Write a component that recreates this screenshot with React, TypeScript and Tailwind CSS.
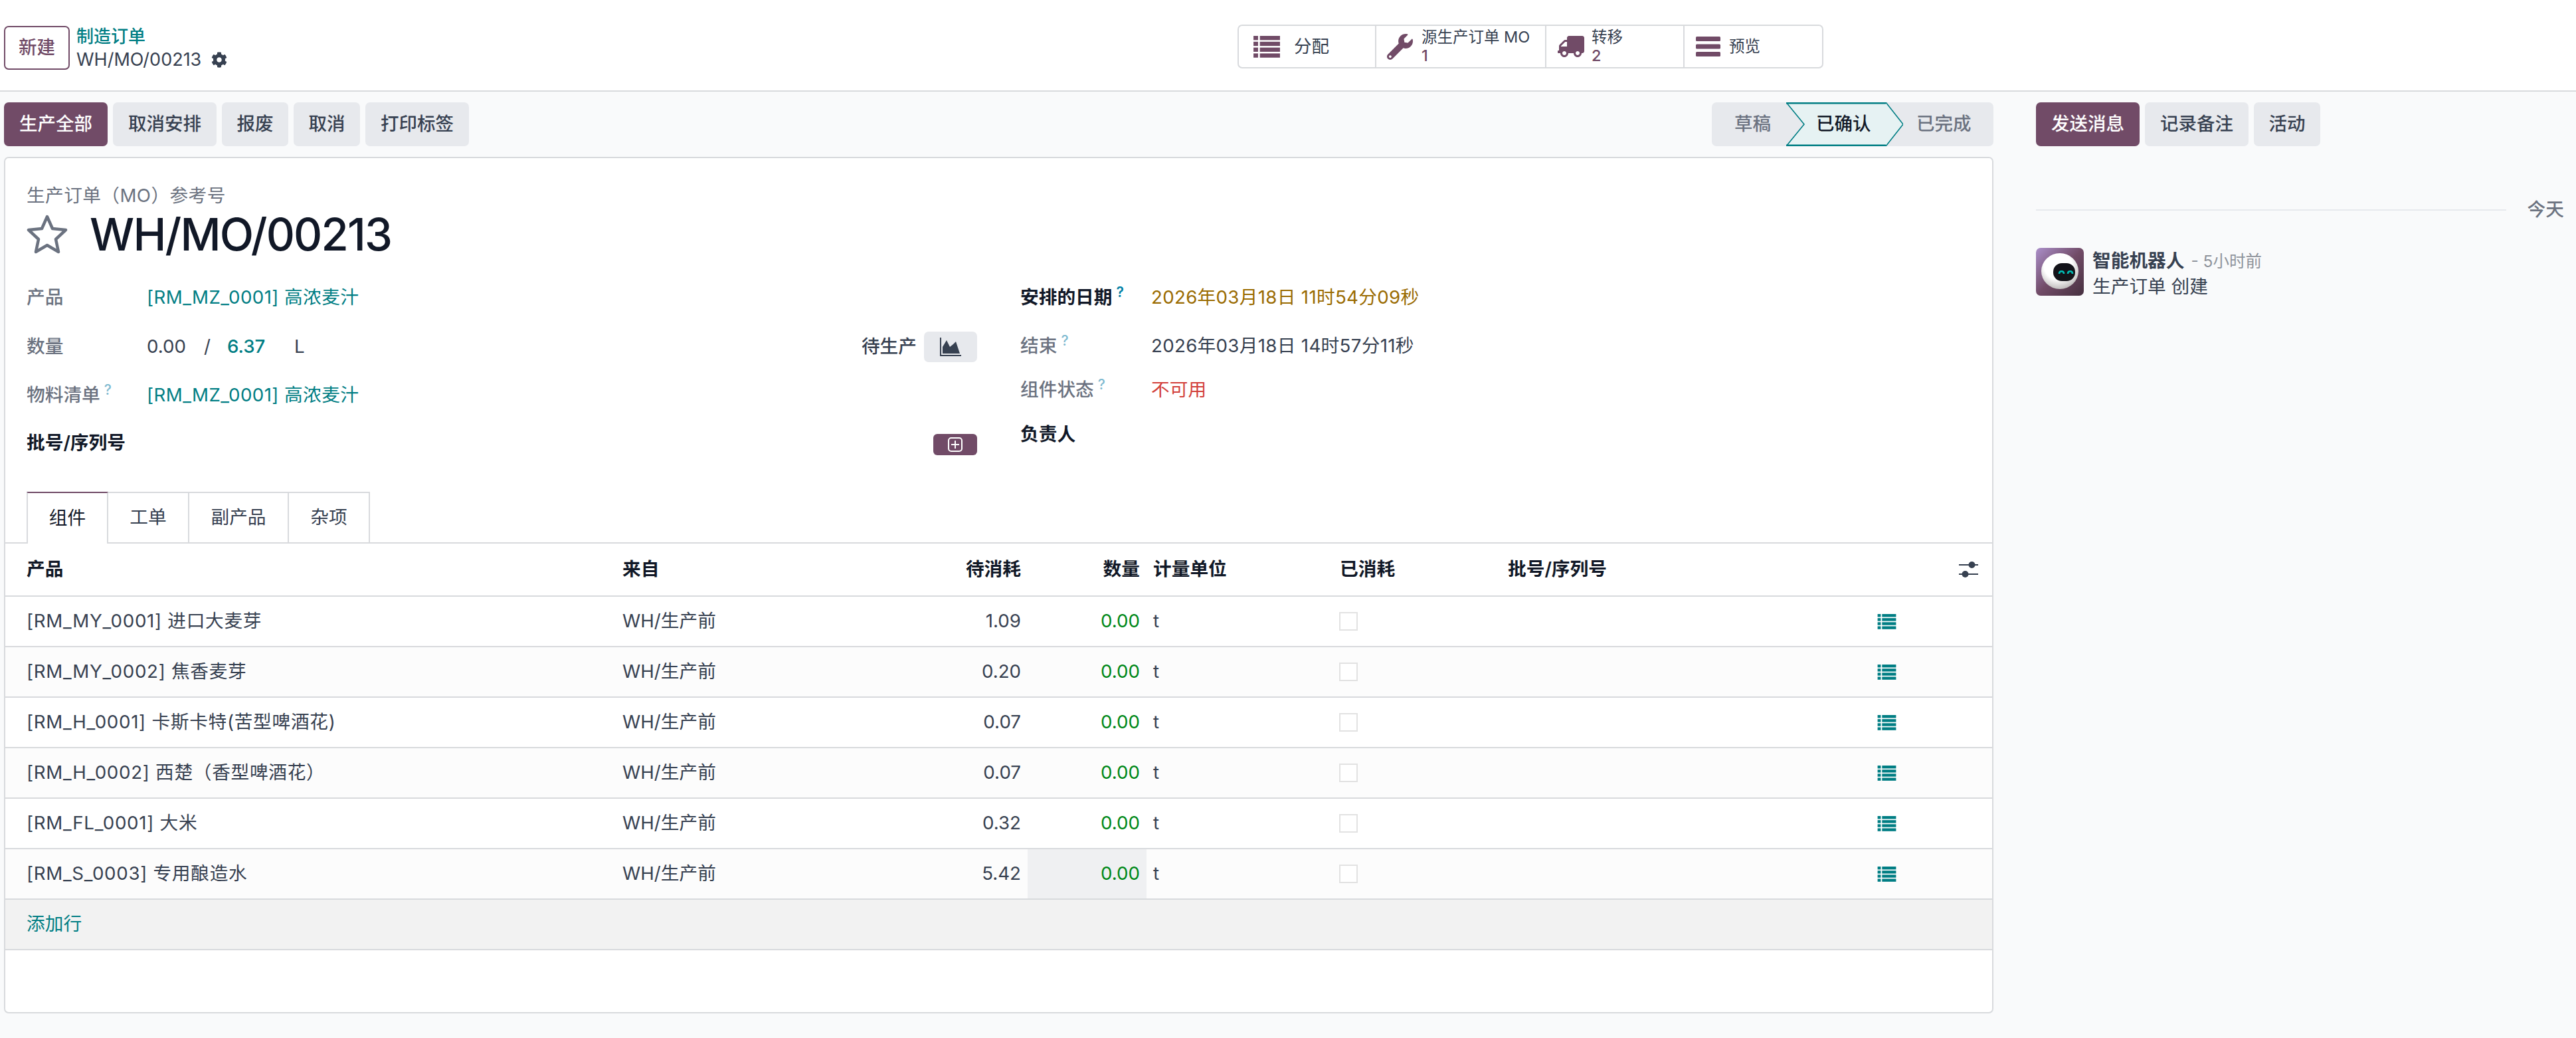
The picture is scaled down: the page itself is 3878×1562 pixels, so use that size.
import React from "react";
import { FaCog, FaWrench, FaTruck } from "react-icons/fa";

const ListIcon = ({ cls }: { cls: string }) => (
  <svg viewBox="0 0 29 24" className={cls} fill="currentColor">
    <rect x="0" y="0" width="5" height="4.6" /><rect x="7" y="0" width="22" height="4.6" />
    <rect x="0" y="6.4" width="5" height="4.6" /><rect x="7" y="6.4" width="22" height="4.6" />
    <rect x="0" y="12.8" width="5" height="4.6" /><rect x="7" y="12.8" width="22" height="4.6" />
    <rect x="0" y="19.2" width="5" height="4.6" /><rect x="7" y="19.2" width="22" height="4.6" />
  </svg>
);

const Help = ({ faint }: { faint?: boolean }) => (
  <sup className={`ml-[6px] text-[21px] relative -top-[10px] ${faint ? "text-[#7fbad0]" : "text-[#0180a5]"}`}>?</sup>
);

const btn = "h-[66px] rounded-[7px] flex items-center justify-center text-[27.5px] font-medium";
const grey = "bg-[#e7e9ed] text-[#374151]";
const primary = "bg-[#714b67] text-white";

const rows: [string, string, boolean?][] = [
  ["[RM_MY_0001] 进口大麦芽", "1.09"],
  ["[RM_MY_0002] 焦香麦芽", "0.20"],
  ["[RM_H_0001] 卡斯卡特(苦型啤酒花)", "0.07"],
  ["[RM_H_0002] 西楚（香型啤酒花）", "0.07"],
  ["[RM_FL_0001] 大米", "0.32"],
  ["[RM_S_0003] 专用酿造水", "5.42", true],
];

const tableCols = "grid grid-cols-[913px_456px_170px_179px_281px_253px_530px_100px_1fr]";

export default function App() {
  return (
    <div className="w-[3878px] h-[1562px] overflow-hidden bg-[#f9fafb] text-[27.7px] text-[#374151] font-[Inter,'Noto_Sans_CJK_SC',sans-serif]">
      {/* top bar */}
      <header className="h-[138px] bg-white border-b-2 border-[#d8dadd] flex items-start pt-[37px] pl-[6px]">
        <div className="w-[1857px] flex items-center gap-[10px]">
          <button className="w-[99px] h-[66px] rounded-[7px] border-2 border-[#714b67] text-[#714b67] text-[27.5px] font-medium bg-white">新建</button>
          <div className="flex flex-col leading-[35px]">
            <span className="text-[#017e84] font-medium text-[26px]">制造订单</span>
            <span className="flex items-center gap-[15px] text-[#374151] text-[27px]">WH/MO/00213<FaCog className="w-[24px] h-[24px]" /></span>
          </div>
        </div>
        <div className="w-[882px] h-[66px] flex rounded-[7px] border-2 border-[#d8dadd] bg-white">
          <div className="w-[207px] flex items-center pl-[21px] border-r-2 border-[#d8dadd]">
            <ListIcon cls="w-[42px] h-[33px] text-[#714b67]" />
            <span className="ml-[20px] text-[26.5px]">分配</span>
          </div>
          <div className="w-[256px] flex items-center pl-[16px] border-r-2 border-[#d8dadd]">
            <FaWrench className="w-[39px] h-[39px] text-[#714b67]" />
            <div className="ml-[13px] flex flex-col leading-[28px] text-[23.5px] whitespace-nowrap">
              <span>源生产订单 MO</span>
              <span className="text-[#714b67] font-medium">1</span>
            </div>
          </div>
          <div className="w-[208px] flex items-center pl-[17px] border-r-2 border-[#d8dadd]">
            <FaTruck className="w-[40px] h-[36px] text-[#714b67] -scale-x-100" />
            <div className="ml-[11px] flex flex-col leading-[28px] text-[23.5px]">
              <span>转移</span>
              <span className="text-[#714b67] font-medium">2</span>
            </div>
          </div>
          <div className="flex-1 flex items-center pl-[17px]">
            <svg viewBox="0 0 37 30" className="w-[37px] h-[30px] text-[#714b67]" fill="currentColor">
              <rect x="0" y="0" width="37" height="7" rx="1.5" />
              <rect x="0" y="11.5" width="37" height="7" rx="1.5" />
              <rect x="0" y="23" width="37" height="7" rx="1.5" />
            </svg>
            <span className="ml-[13px] text-[23.5px]">预览</span>
          </div>
        </div>
      </header>

      <div className="flex">
        {/* main column */}
        <main className="w-[3065px] pl-[6px] pr-[64px] pt-[16px]">
          <div className="flex justify-between h-[66px]">
            <div className="flex gap-[8px]">
              <button className={`${btn} ${primary} w-[156px]`}>生产全部</button>
              <button className={`${btn} ${grey} w-[156px]`}>取消安排</button>
              <button className={`${btn} ${grey} w-[100px]`}>报废</button>
              <button className={`${btn} ${grey} w-[100px]`}>取消</button>
              <button className={`${btn} ${grey} w-[156px]`}>打印标签</button>
            </div>
            <div className="relative w-[424px] h-[66px] rounded-[7px] bg-[#e7e9ed] flex items-center text-[27.5px] font-medium text-[#6b7280]">
              <svg viewBox="0 0 176 66" className="absolute left-[112px] top-0 w-[176px] h-[66px]">
                <polygon points="0,0 150,0 176,33 150,66 0,66 27,33" fill="#e6f2f3" />
                <path d="M0,0 L27,33 L0,66 M150,66 L176,33 L150,0" fill="none" stroke="#017e84" strokeWidth="1.6" />
                <path d="M0,1.2 H150 M0,64.8 H150" fill="none" stroke="#017e84" strokeWidth="2.6" />
              </svg>
              <span className="relative w-[112px] pl-[34px]">草稿</span>
              <span className="relative w-[176px] pl-[45px] text-[#111827]">已确认</span>
              <span className="relative pl-[20px]">已完成</span>
            </div>
          </div>

          {/* sheet */}
          <section className="mt-[16px] h-[1289px] bg-white border-2 border-[#d8dadd] rounded-[7px]">
            <div className="pl-[32px] pt-[35px]">
              <div className="h-[43px] flex items-center text-[#6b7280] tracking-[0.4px]">生产订单（MO）参考号</div>
              <div className="h-[72px] flex items-center">
                <svg viewBox="0 0 62 60" className="w-[62px] h-[60px]" fill="none" stroke="#6b7280" strokeWidth="4.5" strokeLinejoin="round">
                  <polygon points="31,4 39,22 59,24 44,38 48,57 31,47 14,57 18,38 3,24 23,22" />
                </svg>
                <h1 className="ml-[33px] text-[67px] font-medium text-[#111827] leading-none tracking-[-1.8px]">WH/MO/00213</h1>
              </div>
              <div className="mt-[23px] flex">
                <div className="w-[1431px] flex flex-col">
                  <div className="h-[74px] flex items-center">
                    <span className="w-[181px] text-[#6b7280] font-medium">产品</span>
                    <span className="text-[#017e84] tracking-[0.4px]">[RM_MZ_0001] 高浓麦汁</span>
                  </div>
                  <div className="h-[74px] flex items-center">
                    <span className="w-[181px] text-[#6b7280] font-medium">数量</span>
                    <span className="w-[86px]">0.00</span>
                    <span className="w-[35px]">/</span>
                    <span className="w-[101px] text-[#017e84] font-medium">6.37</span>
                    <span>L</span>
                    <span className="ml-auto font-medium">待生产</span>
                    <span className={`ml-[11px] w-[80px] h-[46px] rounded-[7px] flex items-center justify-center ${grey}`}>
                      <svg viewBox="0 0 32 28" className="w-[32px] h-[28px]" fill="currentColor">
                        <path d="M0 0h2v26h30v2H0z" />
                        <path d="M4 24V14L10 4l5 10 5-4 4-4 6 18z" />
                      </svg>
                    </span>
                  </div>
                  <div className="h-[71px] flex items-center">
                    <span className="w-[181px] text-[#6b7280] font-medium">物料清单<Help faint /></span>
                    <span className="text-[#017e84] tracking-[0.4px]">[RM_MZ_0001] 高浓麦汁</span>
                  </div>
                  <div className="h-[74px] flex items-center justify-between">
                    <span className="font-semibold text-[#111827]">批号/序列号</span>
                    <span className={`mt-[4px] w-[66px] h-[32px] rounded-[6px] flex items-center justify-center ${primary}`}>
                      <svg viewBox="0 0 24 24" className="w-[24px] h-[24px]" fill="none" stroke="white" strokeWidth="2">
                        <rect x="2" y="2" width="20" height="20" rx="4" />
                        <path d="M12 6v12M6 12h12" />
                      </svg>
                    </span>
                  </div>
                </div>
                <div className="ml-[65px] flex flex-col">
                  <div className="h-[74px] flex items-center">
                    <span className="w-[197px] font-semibold text-[#111827]">安排的日期<Help /></span>
                    <span className="text-[#9a6b01] tracking-[0.3px]">2026年03月18日 11时54分09秒</span>
                  </div>
                  <div className="h-[72px] flex items-center">
                    <span className="w-[197px] text-[#6b7280] font-medium">结束<Help faint /></span>
                    <span className="tracking-[0.3px]">2026年03月18日 14时57分11秒</span>
                  </div>
                  <div className="h-[60px] flex items-center">
                    <span className="w-[197px] text-[#6b7280] font-medium">组件状态<Help faint /></span>
                    <span className="text-[#d23f3a]">不可用</span>
                  </div>
                  <div className="h-[74px] flex items-center font-semibold text-[#111827]">负责人</div>
                </div>
              </div>
            </div>

            {/* tabs */}
            <div className="mt-[36px] h-[78px] flex pl-[32px] border-b-2 border-[#d8dadd]">
              <div className="w-[123px] h-[78px] flex items-center justify-center bg-white border-x-2 border-[#d8dadd] border-t-2 border-t-[#714b67] text-[#111827]">组件</div>
              <div className="w-[122px] flex items-center justify-center border-t-2 border-r-2 border-[#d8dadd]">工单</div>
              <div className="w-[150px] flex items-center justify-center border-t-2 border-r-2 border-[#d8dadd]">副产品</div>
              <div className="w-[122px] flex items-center justify-center border-t-2 border-r-2 border-[#d8dadd]">杂项</div>
            </div>

            {/* table */}
            <div className={`${tableCols} h-[80px] items-center border-b-2 border-[#d8dadd] font-semibold text-[#111827]`}>
              <div className="pl-[32px]">产品</div>
              <div className="pl-[16px]">来自</div>
              <div className="pr-[10px] text-right">待消耗</div>
              <div className="pr-[10px] text-right">数量</div>
              <div className="pl-[10px]">计量单位</div>
              <div className="pl-[10px]">已消耗</div>
              <div className="pl-[10px]">批号/序列号</div>
              <div />
              <div className="pl-[59px]">
                <svg viewBox="0 0 29 24" className="w-[29px] h-[24px]">
                  <path d="M0 5h29M0 19h29" stroke="#374151" strokeWidth="2" />
                  <circle cx="19.5" cy="5" r="5" fill="#374151" />
                  <circle cx="9.5" cy="19" r="5" fill="#374151" />
                </svg>
              </div>
            </div>
            {rows.map(([name, qty, focus], i) => (
              <div key={name} className={`${tableCols} h-[76px] items-stretch border-b-2 border-[#d8dadd] ${i % 2 ? "bg-[#fcfcfc]" : "bg-white"}`}>
                <div className="pl-[32px] flex items-center tracking-[0.7px]">{name}</div>
                <div className="pl-[16px] flex items-center">WH/生产前</div>
                <div className="pr-[10px] flex items-center justify-end">{qty}</div>
                <div className={`pr-[10px] flex items-center justify-end text-[#008818] ${focus ? "bg-[#eff0f2]" : ""}`}>0.00</div>
                <div className="pl-[10px] flex items-center">t</div>
                <div className="pl-[9px] flex items-center">
                  <span className="w-[28px] h-[28px] border-2 border-[#e2e2e2] bg-white" />
                </div>
                <div />
                <div className="pl-[36px] flex items-center">
                  <ListIcon cls="w-[29px] h-[23px] text-[#017e84]" />
                </div>
                <div />
              </div>
            ))}
            <div className="h-[76px] flex items-center pl-[32px] bg-[#f2f2f2] border-b-2 border-[#d8dadd] text-[#017e84]">添加行</div>
          </section>
        </main>

        {/* chatter */}
        <aside className="flex-1 pt-[16px] pr-[18px]">
          <div className="flex gap-[8px]">
            <button className={`${btn} ${primary} w-[156px]`}>发送消息</button>
            <button className={`${btn} ${grey} w-[156px]`}>记录备注</button>
            <button className={`${btn} ${grey} w-[100px]`}>活动</button>
          </div>
          <div className="mt-[78px] h-[36px] flex items-center gap-[32px]">
            <div className="flex-1 h-[2px] bg-[#e7e9ed]" />
            <span className="text-[#6b7280] font-medium">今天</span>
          </div>
          <div className="mt-[39px] flex gap-[13px]">
            <svg viewBox="0 0 72 72" className="w-[72px] h-[72px] rounded-[7px]">
              <defs>
                <linearGradient id="av" x1="0" y1="0" x2="1" y2="1">
                  <stop offset="0" stopColor="#ab8fca" />
                  <stop offset="0.5" stopColor="#714b67" />
                  <stop offset="1" stopColor="#46303f" />
                </linearGradient>
                <radialGradient id="ball" cx="0.45" cy="0.35" r="0.75">
                  <stop offset="0.5" stopColor="#ffffff" />
                  <stop offset="1" stopColor="#a9a5a5" />
                </radialGradient>
              </defs>
              <rect width="72" height="72" fill="url(#av)" />
              <ellipse cx="36" cy="35" rx="28" ry="27" fill="url(#ball)" />
              <rect x="26" y="23" width="33" height="27" rx="13" fill="#14141a" />
              <path d="M35 39c0-5 7-5 7 0M48 39c0-5 7-5 7 0" fill="none" stroke="#00bdb6" strokeWidth="2.6" />
            </svg>
            <div className="flex flex-col leading-[38px]">
              <div className="whitespace-nowrap">
                <span className="font-semibold">智能机器人</span>
                <span className="ml-[10px] text-[24.5px] text-[#8f949c]">- 5小时前</span>
              </div>
              <div>生产订单 创建</div>
            </div>
          </div>
        </aside>
      </div>
    </div>
  );
}
